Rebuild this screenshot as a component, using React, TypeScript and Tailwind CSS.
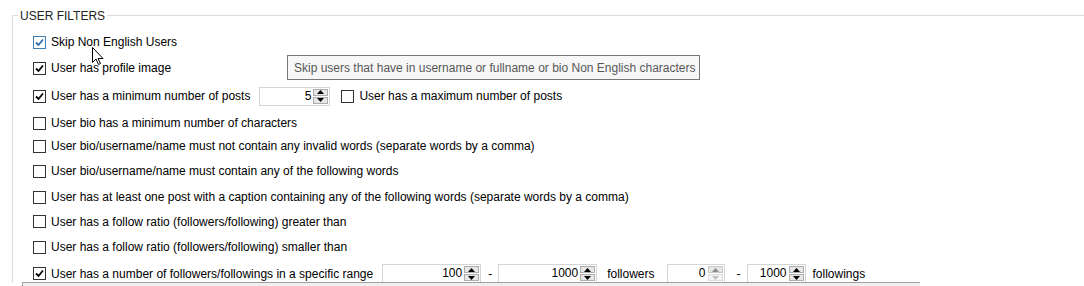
import React from 'react';

const font = { fontFamily: '"Liberation Sans", Arial, sans-serif' };

const Check: React.FC<{ checked?: boolean; hot?: boolean }> = ({ checked, hot }) => (
  <span
    className={`w-[13px] h-[13px] shrink-0 border bg-white flex items-center justify-center ${
      hot ? 'border-[#3c7fb1] bg-[#e8f3fc]' : 'border-[#333333]'
    }`}
  >
    {checked && (
      <svg width="9" height="9" viewBox="0 0 9 9">
        <path d="M1 4.5 L3.5 7 L8 1.5" fill="none" stroke={hot ? '#2a6cb5' : '#000'} strokeWidth="1.8" />
      </svg>
    )}
  </span>
);

const Row: React.FC<{ h: string; checked?: boolean; hot?: boolean; label: string; children?: React.ReactNode }> = ({
  h,
  checked,
  hot,
  label,
  children,
}) => (
  <div className={`flex items-center ${h}`}>
    <Check checked={checked} hot={hot} />
    <span className="ml-[5px] whitespace-nowrap">{label}</span>
    {children}
  </div>
);

const Spin: React.FC<{ value: string; w: string; upDisabled?: boolean; downDisabled?: boolean }> = ({
  value,
  w,
  upDisabled,
  downDisabled,
}) => (
  <div className={`flex h-[19px] border border-[#d5d5d5] bg-white ${w}`}>
    <span className="flex-1 text-right pr-[2px] leading-[17px]">{value}</span>
    <div className="w-[16px] flex flex-col py-[1px] pr-[1px] gap-[1px]">
      <div
        className={`flex-1 flex items-center justify-center bg-[#e6e6e6] border ${
          upDisabled ? 'border-[#c8c8c8]' : 'border-[#adadad]'
        }`}
      >
        <svg width="7" height="4" viewBox="0 0 7 4">
          <path d="M0 4 L3.5 0 L7 4 Z" fill={upDisabled ? '#8a8a8a' : '#000'} />
        </svg>
      </div>
      <div
        className={`flex-1 flex items-center justify-center bg-[#e6e6e6] border ${
          downDisabled ? 'border-[#dcdcdc] bg-[#f4f4f4]' : 'border-[#adadad]'
        }`}
      >
        <svg width="7" height="4" viewBox="0 0 7 4">
          <path d="M0 0 L7 0 L3.5 4 Z" fill={downDisabled ? '#c0c0c0' : '#000'} />
        </svg>
      </div>
    </div>
  </div>
);

export default function App() {
  return (
    <div className="relative w-[1084px] h-[286px] bg-white overflow-hidden text-[12px] text-black" style={font}>
      {/* Group box */}
      <div className="absolute left-[12px] top-[15px] right-0 bottom-[3px] border-l border-t border-[#dcdcdc]" />
      <div className="absolute left-[18px] top-[7px] bg-white px-[2px] text-[12px] text-[#222]">USER FILTERS</div>

      <div className="relative pt-[29px] pl-[33px]">
        <Row h="h-[26px]" checked hot label="Skip Non English Users" />
        <Row h="h-[26px]" checked label="User has profile image" />
        <Row h="h-[30px]" checked label="User has a minimum number of posts">
          <div className="ml-[9px]">
            <Spin value="5" w="w-[71px]" />
          </div>
          <div className="ml-[11px]">
            <Check />
          </div>
          <span className="ml-[5px] whitespace-nowrap">User has a maximum number of posts</span>
        </Row>
        <Row h="h-[24px]" label="User bio has a minimum number of characters" />
        <Row h="h-[22px]" label="User bio/username/name must not contain any invalid words (separate words by a comma)" />
        <Row h="h-[28px]" label="User bio/username/name must contain any of the following words" />
        <Row h="h-[24px]" label="User has at least one post with a caption containing any of the following words (separate words by a comma)" />
        <Row h="h-[25px]" label="User has a follow ratio (followers/following) greater than" />
        <Row h="h-[26px]" label="User has a follow ratio (followers/following) smaller than" />
        <Row h="h-[27px]" checked label="User has a number of followers/followings in a specific range">
          <div className="ml-[9px]">
            <Spin value="100" w="w-[99px]" />
          </div>
          <span className="ml-[7px]">-</span>
          <div className="ml-[6px]">
            <Spin value="1000" w="w-[99px]" />
          </div>
          <span className="ml-[10px]">followers</span>
          <div className="ml-[12px]">
            <Spin value="0" w="w-[58px]" upDisabled downDisabled />
          </div>
          <span className="ml-[12px]">-</span>
          <div className="ml-[6px]">
            <Spin value="1000" w="w-[59px]" />
          </div>
          <span className="ml-[7px]">followings</span>
        </Row>
      </div>

      {/* bottom strip */}
      <div className="absolute left-[22px] top-[282px] w-[898px] h-[4px] border-t border-l border-[#a0a0a0] bg-[#f0f0f0]" />

      {/* Tooltip */}
      <div className="absolute left-[287px] top-[55px] w-[413px] h-[25px] border border-[#767676] bg-[#f7f7f7] text-[#575757] flex items-center pl-[6px] whitespace-nowrap">
        Skip users that have in username or fullname or bio Non English characters
      </div>

      {/* Cursor */}
      <svg className="absolute left-[92px] top-[47px]" width="12" height="19" viewBox="0 0 12 19">
        <path d="M0.5 0.5 L0.5 15.5 L4 12 L6.5 17.5 L8.5 16.5 L6 11.5 L11 11.5 Z" fill="#fff" stroke="#000" strokeWidth="1" />
      </svg>
    </div>
  );
}
